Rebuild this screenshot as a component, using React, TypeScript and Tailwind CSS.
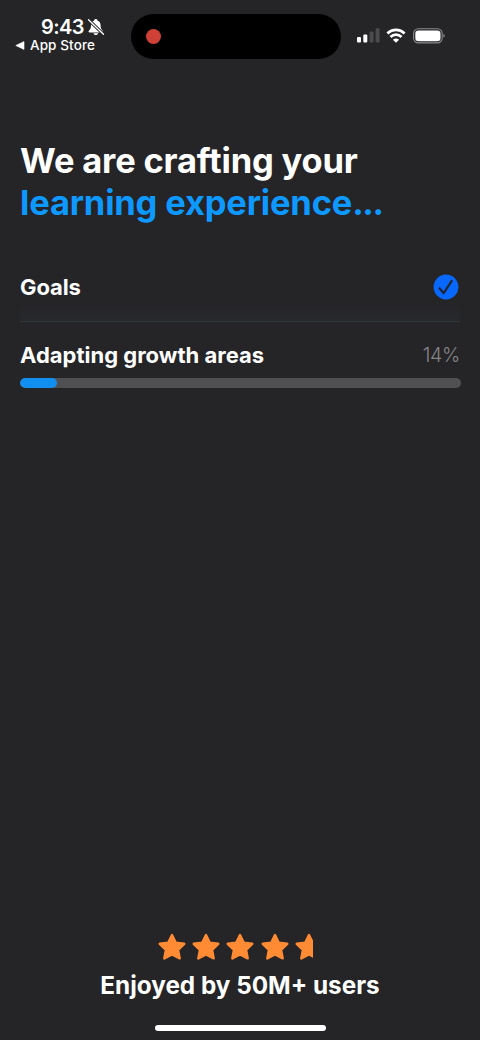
type Step = {
  label: string;
  progress: number;
};

const steps: Step[] = [
  { label: "Goals", progress: 100 },
  { label: "Adapting growth areas", progress: 14 },
];

const stars = [28, 28, 28, 28, 18];

function MutedBell() {
  return (
    <svg width="18" height="18" viewBox="0 0 17 18" fill="none">
      <path
        d="M8.3 1.1C7.4 1.1 6.8 1.7 6.7 2.5C4.6 3.2 3.5 5 3.5 7.3C3.5 10.3 2.8 11.3 1.6 12.4C1.1 12.9 .9 13.2 .9 13.6C.9 14.1 1.3 14.4 1.9 14.4H14.7C15.3 14.4 15.7 14.1 15.7 13.6C15.7 13.2 15.5 12.9 15 12.4C13.8 11.3 13.1 10.3 13.1 7.3C13.1 5 12 3.2 9.9 2.5C9.8 1.7 9.2 1.1 8.3 1.1Z"
        fill="#fff"
      />
      <path d="M5.9 15.2H10.7C10.4 16.4 9.5 17 8.3 17S6.2 16.4 5.9 15.2Z" fill="#fff" />
      <path d="M.8 1.6L16.2 16.4" stroke="#252427" strokeWidth="3.2" />
      <path d="M1 1.8L16 16.2" stroke="#fff" strokeWidth="1.3" strokeLinecap="round" />
    </svg>
  );
}

function SignalIcon() {
  return (
    <svg width="23" height="15" viewBox="0 0 23 15">
      <rect x="0" y="9" width="4" height="5.5" rx="1.1" fill="#fff" />
      <rect x="6.3" y="6.5" width="4" height="8" rx="1.1" fill="#fff" />
      <rect x="12.6" y="3.5" width="4" height="11" rx="1.1" fill="#4b4a4d" />
      <rect x="18.6" y="0.3" width="4" height="14.2" rx="1.1" fill="#4b4a4d" />
    </svg>
  );
}

function WifiIcon() {
  return (
    <svg width="20" height="15" viewBox="0 0 20 15" fill="none" stroke="#fff" strokeWidth="2.8">
      <path d="M1.4 5.4C6.2 .8 13.8 .8 18.6 5.4" />
      <path d="M4.5 8.9C7.6 5.9 12.4 5.9 15.5 8.9" />
      <path d="M10 14.8L6.9 11.7C8.6 10.1 11.4 10.1 13.1 11.7Z" fill="#fff" stroke="none" />
    </svg>
  );
}

function BatteryIcon() {
  return (
    <svg width="33" height="16" viewBox="0 0 33 16">
      <rect x="0.6" y="0.7" width="28.6" height="14.2" rx="4.8" fill="none" stroke="#8a898c" strokeWidth="1.1" />
      <rect x="2.3" y="2.4" width="25.2" height="10.8" rx="3.3" fill="#fff" />
      <path d="M30.4 6C31.3 6.3 31.7 6.9 31.7 7.8C31.7 8.7 31.3 9.3 30.4 9.6Z" fill="#8a898c" />
    </svg>
  );
}

function StatusBar() {
  return (
    <header className="flex h-[70px] items-start">
      <div className="w-[131px] shrink-0 pt-[15px]">
        <div className="flex items-start pl-[41px]">
          <span className="w-[46px] text-[20px] leading-6 font-semibold tracking-[-0.6px]">9:43</span>
          <div className="pt-[3px]">
            <MutedBell />
          </div>
        </div>
        <div className="-mt-[3px] flex items-center gap-[5px] pl-[15px]">
          <svg width="10" height="9" viewBox="0 0 10 9">
            <path d="M.8 4.5L9 .6V8.4Z" fill="#fff" stroke="#fff" strokeWidth=".6" strokeLinejoin="round" />
          </svg>
          <span className="text-[13.5px] leading-[18px] font-medium tracking-[0.1px] whitespace-nowrap">
            App Store
          </span>
        </div>
      </div>
      <div className="mt-[14px] flex h-[45px] w-[210px] items-center rounded-full bg-black pl-[15px]">
        <div className="size-[15px] rounded-full bg-[#cf4137]" />
      </div>
      <div className="flex items-start pt-7 pl-4">
        <SignalIcon />
        <div className="ml-[6px]">
          <WifiIcon />
        </div>
        <div className="ml-[7px]">
          <BatteryIcon />
        </div>
      </div>
    </header>
  );
}

function CheckBadge() {
  return (
    <svg width="26" height="26" viewBox="0 0 26 26" fill="none">
      <circle cx="13" cy="13" r="12.4" fill="#0768fb" />
      <path d="M6.5 14.3L10.7 19.2L18.7 6.8" stroke="#202536" strokeWidth="2.2" strokeLinecap="round" strokeLinejoin="round" />
    </svg>
  );
}

function StepRow({ step }: { step: Step }) {
  const done = step.progress >= 100;

  if (done) {
    return (
      <div className="flex h-[49px] items-start justify-between border-b border-[#30363a] bg-linear-to-b from-[#252427] from-60% to-[#26292c]">
        <span className="text-[22px] leading-7 font-bold tracking-[-0.1px]">{step.label}</span>
        <div className="mr-px pt-px">
          <CheckBadge />
        </div>
      </div>
    );
  }

  return (
    <div className="pt-[19px]">
      <div className="flex items-center justify-between">
        <span className="text-[22px] leading-7 font-bold">{step.label}</span>
        <span className="text-[19.5px] leading-7 font-light tracking-[-0.3px] text-[#858487]">{step.progress}%</span>
      </div>
      <div className="mt-[9px] -mr-px h-[10px] overflow-hidden rounded-full bg-[#504f52]">
        <div
          className="h-full rounded-full bg-[#108ff0]"
          style={{ width: `${(step.progress / 100) * 60.5 + 29}px` }}
        />
      </div>
    </div>
  );
}

function Star({ width }: { width: number }) {
  return (
    <svg width={width} height="28" viewBox={`0 0 ${width} 28`}>
      <path
        d="M14 2L17.7 9.6L26.3 10.8L20.1 16.8L21.7 25.4L14 21.4L6.3 25.4L7.9 16.8L1.7 10.8L10.3 9.6Z"
        fill="#ff8b34"
        stroke="#ff8b34"
        strokeWidth="2.4"
        strokeLinejoin="round"
      />
    </svg>
  );
}

export default function App() {
  return (
    <div className="flex h-[1040px] w-[480px] flex-col overflow-hidden bg-[#252427] font-['Inter',sans-serif] text-white">
      <StatusBar />

      <main className="flex-1 px-5 pt-[70px]">
        <h1 className="text-[34.5px] leading-[42px] font-bold tracking-[-0.18px] whitespace-nowrap">
          We are crafting your
          <br />
          <span className="text-[#0d99ff]">
            learning experience<span className="tracking-[-1.4px]">...</span>
          </span>
        </h1>
        <div className="mt-[49px]">
          {steps.map((step) => (
            <StepRow key={step.label} step={step} />
          ))}
        </div>
      </main>

      <footer className="flex flex-col items-center">
        <div className="flex w-[164px] gap-[6.2px]">
          {stars.map((width, i) => (
            <Star key={i} width={width} />
          ))}
        </div>
        <p className="mt-[9px] text-[24.3px] leading-[30px] font-bold">Enjoyed by 50M+ users</p>
        <div className="mt-[25px] mb-[9px] h-[6px] w-[171px] rounded-full bg-white" />
      </footer>
    </div>
  );
}
